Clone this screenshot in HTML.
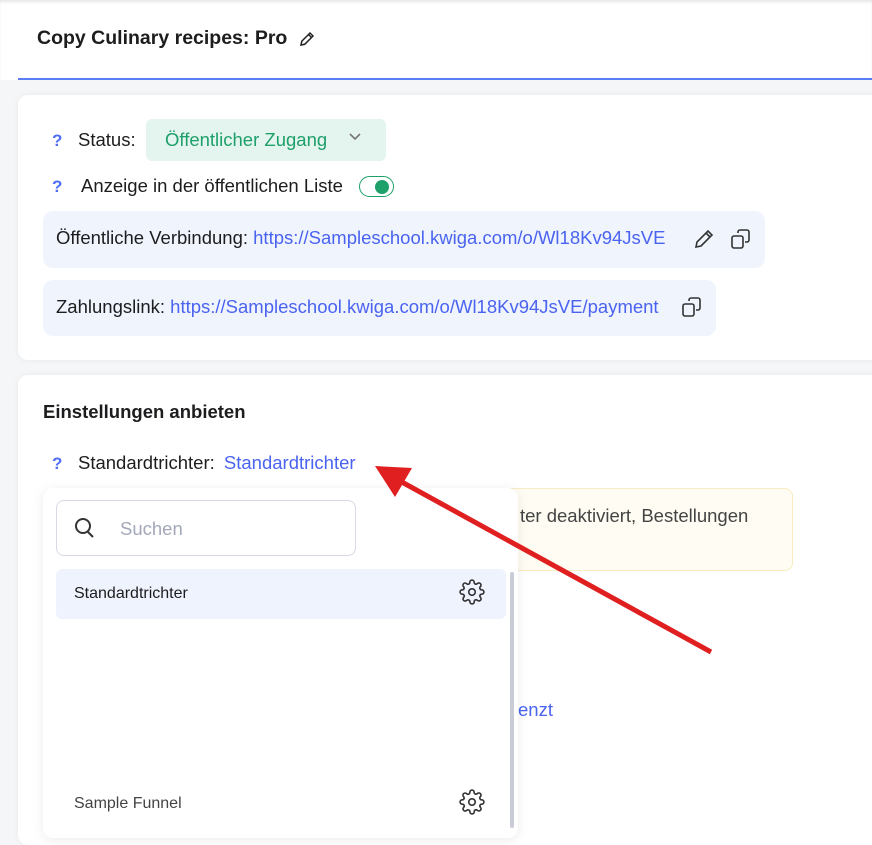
<!DOCTYPE html>
<html><head><meta charset="utf-8"><style>
*{box-sizing:border-box;margin:0;padding:0}
body{width:872px;height:828px;overflow:hidden;background:#f5f6f8;font-family:"Liberation Sans",sans-serif;color:#1d1d1f;position:relative}
.abs{position:absolute}
.card{position:absolute;background:#fff;border-radius:10px;box-shadow:0 0 8px rgba(0,0,0,.05)}
.q{color:#4f6ef7;font-weight:bold;font-size:17px}
.t{font-size:18.5px;line-height:22px}
.link{color:#4a63f0}
.pill{position:absolute;background:#f0f4fd;border-radius:10px}
</style></head><body>
<div class="abs" style="left:0;top:0;width:872px;height:80px;background:#fff;box-shadow:inset 0 3px 4px -2px rgba(0,0,0,.15)"></div>
<div class="abs" style="left:37px;top:27px;font-size:19.5px;font-weight:bold">Copy Culinary recipes: Pro</div>
<svg class="abs" style="left:298px;top:30px" width="18" height="18" viewBox="0 0 24 24" fill="none" stroke="#222" stroke-width="2"><path d="M4 20l1-5L16 4l4 4L9 19z M14 6l4 4"/></svg>
<div class="abs" style="left:18px;top:78px;width:854px;height:2px;background:#5a7cf5"></div>

<div class="card" style="left:18px;top:95px;width:870px;height:265px"></div>
<div class="abs q" style="left:52px;top:131px">?</div>
<div class="abs t" style="left:78px;top:129px">Status:</div>
<div class="abs" style="left:146px;top:119px;width:240px;height:42px;background:#e4f4ee;border-radius:6px"></div>
<div class="abs t" style="left:165px;top:129px;color:#1ea06b">Öffentlicher Zugang</div>
<svg class="abs" style="left:348px;top:132px" width="14" height="10" viewBox="0 0 14 10" fill="none" stroke="#777" stroke-width="1.6"><path d="M2 2l5 5 5-5"/></svg>
<div class="abs q" style="left:52px;top:177px">?</div>
<div class="abs t" style="left:81px;top:175px">Anzeige in der öffentlichen Liste</div>
<div class="abs" style="left:359px;top:176px;width:35px;height:21px;border:1.5px solid #1ea06b;border-radius:11px"></div>
<div class="abs" style="left:375px;top:180px;width:14px;height:14px;background:#1ea06b;border-radius:50%"></div>

<div class="pill" style="left:43px;top:211px;width:722px;height:57px"></div>
<div class="abs t" style="left:56px;top:227px">Öffentliche Verbindung: <span class="link">https://Sampleschool.kwiga.com/o/Wl18Kv94JsVE</span></div>
<svg class="abs" style="left:692px;top:227px" width="24" height="24" viewBox="0 0 24 24" fill="none" stroke="#333" stroke-width="1.6"><path d="M4 20l1-5L16 4l4 4L9 19z M14 6l4 4"/></svg>
<svg class="abs" style="left:729px;top:227px" width="24" height="24" viewBox="0 0 24 24" fill="none" stroke="#333" stroke-width="1.6"><rect x="3" y="9" width="11" height="12" rx="2"/><path d="M9 6V5a2 2 0 0 1 2-2h7a2 2 0 0 1 2 2v8a2 2 0 0 1-2 2h-2"/></svg>
<div class="pill" style="left:43px;top:280px;width:673px;height:56px"></div>
<div class="abs t" style="left:56px;top:296px">Zahlungslink: <span class="link">https://Sampleschool.kwiga.com/o/Wl18Kv94JsVE/payment</span></div>
<svg class="abs" style="left:680px;top:295px" width="24" height="24" viewBox="0 0 24 24" fill="none" stroke="#333" stroke-width="1.6"><rect x="3" y="9" width="11" height="12" rx="2"/><path d="M9 6V5a2 2 0 0 1 2-2h7a2 2 0 0 1 2 2v8a2 2 0 0 1-2 2h-2"/></svg>

<div class="card" style="left:18px;top:375px;width:870px;height:470px"></div>
<div class="abs" style="left:43px;top:401px;font-size:18.5px;font-weight:bold">Einstellungen anbieten</div>
<div class="abs q" style="left:52px;top:454px">?</div>
<div class="abs t" style="left:78px;top:452px">Standardtrichter: <span class="link" style="margin-left:4px">Standardtrichter</span></div>
<div class="abs" style="left:470px;top:488px;width:323px;height:83px;background:#fffdf3;border:1px solid #f8ecc0;border-radius:8px"></div>
<div class="abs t" style="left:520px;top:505px;color:#444">ter deaktiviert, Bestellungen</div>
<div class="abs t link" style="left:518px;top:699px">enzt</div>

<div class="abs" style="left:43px;top:488px;width:475px;height:350px;background:#fff;border-radius:10px;box-shadow:0 2px 12px rgba(0,0,0,.08)"></div>
<div class="abs" style="left:56px;top:500px;width:300px;height:56px;border:1px solid #d8d9e3;border-radius:8px"></div>
<svg class="abs" style="left:73px;top:516px" width="24" height="24" viewBox="0 0 24 24" fill="none" stroke="#333" stroke-width="2"><circle cx="10" cy="10" r="7"/><path d="M15 16l5 5"/></svg>
<div class="abs t" style="left:120px;top:518px;color:#a3a8b8">Suchen</div>
<div class="abs" style="left:56px;top:569px;width:450px;height:50px;background:#eff3fd;border-radius:6px"></div>
<div class="abs" style="left:74px;top:585px;font-size:16px">Standardtrichter</div>
<div class="abs" style="left:74px;top:795px;font-size:16px;color:#444">Sample Funnel</div>
<svg class="abs" style="left:459px;top:579px" width="26" height="26" viewBox="0 0 24 24" fill="none" stroke="#333" stroke-width="1.5"><circle cx="12" cy="12" r="3"/><path d="M19.4 15a1.65 1.65 0 0 0 .33 1.82l.06.06a2 2 0 1 1-2.83 2.830l-.06-.06a1.65 1.65 0 0 0-1.82-.33 1.65 1.65 0 0 0-1 1.51V21a2 2 0 0 1-4 0v-.09A1.65 1.65 0 0 0 9 19.4a1.65 1.65 0 0 0-1.82.33l-.06.06a2 2 0 1 1-2.83-2.83l.06-.06A1.65 1.65 0 0 0 4.68 15a1.65 1.65 0 0 0-1.51-1H3a2 2 0 0 1 0-4h.09A1.65 1.65 0 0 0 4.6 9a1.65 1.65 0 0 0-.33-1.82l-.06-.06a2 2 0 1 1 2.83-2.83l.06.06A1.65 1.65 0 0 0 9 4.68 1.65 1.65 0 0 0 10 3.17V3a2 2 0 0 1 4 0v.09a1.65 1.65 0 0 0 1 1.51 1.65 1.65 0 0 0 1.82-.33l.06-.06a2 2 0 1 1 2.83 2.83l-.06.06A1.65 1.65 0 0 0 19.4 9a1.65 1.65 0 0 0 1.51 1H21a2 2 0 0 1 0 4h-.09a1.65 1.65 0 0 0-1.51 1z"/></svg>
<svg class="abs" style="left:459px;top:789px" width="26" height="26" viewBox="0 0 24 24" fill="none" stroke="#333" stroke-width="1.5"><circle cx="12" cy="12" r="3"/><path d="M19.4 15a1.65 1.65 0 0 0 .33 1.82l.06.06a2 2 0 1 1-2.83 2.83l-.06-.06a1.65 1.65 0 0 0-1.82-.33 1.65 1.65 0 0 0-1 1.51V21a2 2 0 0 1-4 0v-.09A1.65 1.65 0 0 0 9 19.4a1.65 1.65 0 0 0-1.82.33l-.06.06a2 2 0 1 1-2.83-2.83l.06-.06A1.65 1.65 0 0 0 4.68 15a1.65 1.65 0 0 0-1.51-1H3a2 2 0 0 1 0-4h.09A1.65 1.65 0 0 0 4.6 9a1.65 1.65 0 0 0-.33-1.82l-.06-.06a2 2 0 1 1 2.83-2.83l.06.06A1.65 1.65 0 0 0 9 4.68 1.65 1.65 0 0 0 10 3.17V3a2 2 0 0 1 4 0v.09a1.65 1.65 0 0 0 1 1.51 1.65 1.65 0 0 0 1.82-.33l.06-.06a2 2 0 1 1 2.83 2.83l-.06.06A1.65 1.65 0 0 0 19.4 9a1.65 1.65 0 0 0 1.51 1H21a2 2 0 0 1 0 4h-.09a1.65 1.65 0 0 0-1.51 1z"/></svg>
<div class="abs" style="left:510px;top:572px;width:4px;height:256px;background:#c9ccd4;border-radius:2px"></div>

<svg class="abs" style="left:0;top:0" width="872" height="828"><line x1="711" y1="652" x2="400" y2="481" stroke="#e02020" stroke-width="5"/><polygon points="375,466 412,468 395,497" fill="#e02020"/></svg>
</body></html>
